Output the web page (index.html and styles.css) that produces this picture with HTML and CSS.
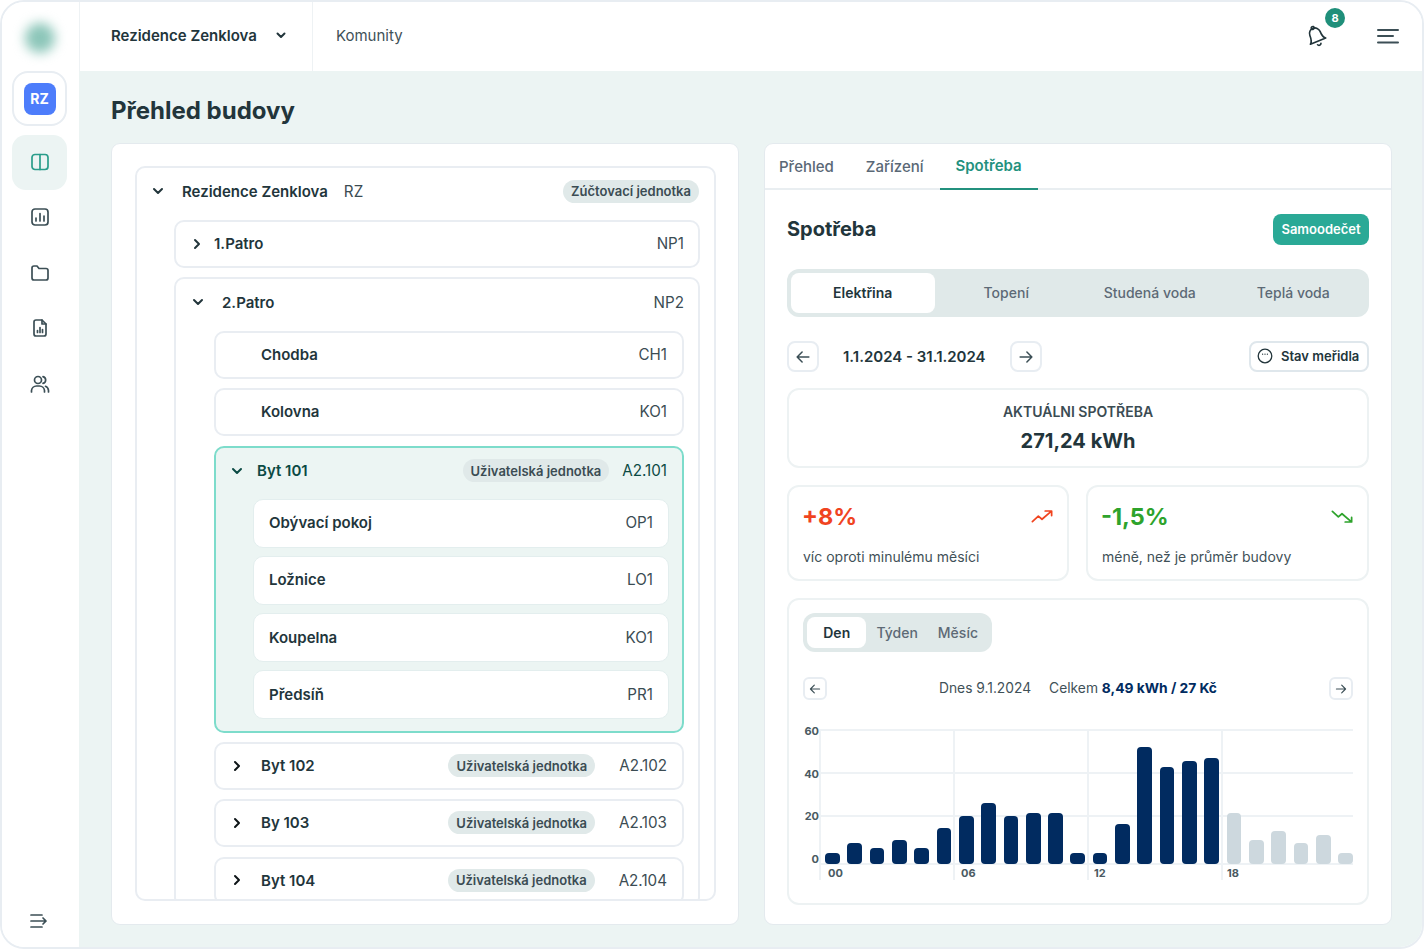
FILE: index.html
```html
<!DOCTYPE html>
<html lang="cs">
<head>
<meta charset="utf-8">
<title>Přehled budovy</title>
<link rel="stylesheet" href="styles.css">
</head>
<body>
<div class="frame">
  <aside class="sidebar">
    <div class="logo"></div>
    <div class="avatar-card"><div class="avatar">RZ</div></div>
    <nav class="nav">
      <a class="nav-item active"><svg class="ico" viewBox="0 0 20 20"><rect x="2" y="2.5" width="16" height="15" rx="3"/><path d="M10 2.500v15"/></svg></a>
      <a class="nav-item"><svg class="ico" viewBox="0 0 20 20"><rect x="2" y="2" width="16" height="16" rx="3"/><path d="M6 14v-3M10 14V6.500M14 14V9"/></svg></a>
      <a class="nav-item"><svg class="ico" viewBox="0 0 20 20"><path d="M2 5a2 2 0 0 1 2-2h3l2 2.500h7a2 2 0 0 1 2 2V15a2 2 0 0 1-2 2H4a2 2 0 0 1-2-2z"/></svg></a>
      <a class="nav-item"><svg class="ico" viewBox="0 0 20 20"><path d="M4 4a2 2 0 0 1 2-2h6l4 4v10a2 2 0 0 1-2 2H6a2 2 0 0 1-2-2z"/><path d="M12 2v4h4M7.500 14.500v-2M10 14.500V9.500M12.500 14.500v-3"/></svg></a>
      <a class="nav-item"><svg class="ico" viewBox="0 0 20 20"><circle cx="8" cy="6" r="3.500"/><path d="M1.500 18v-1.500a5 5 0 0 1 5-4.500h3a5 5 0 0 1 5 4.500V18M13 2.600a3.500 3.500 0 0 1 0 6.800M15.500 12.300a5 5 0 0 1 3 4.200V18"/></svg></a>
    </nav>
    <a class="collapse"><svg class="ico" viewBox="0 0 20 20"><path d="M2 4h11M2 10h15M2 16h11M14 7l3 3-3 3"/></svg></a>
  </aside>

  <div class="main">
    <header class="topbar">
      <div class="building">
        <span>Rezidence Zenklova</span>
        <svg class="chev" viewBox="0 0 16 16"><path d="M4.500 6.500 8 10l3.500-3.500"/></svg>
      </div>
      <div class="top-link">Komunity</div>
      <div class="top-actions">
        <div class="bell">
          <svg class="bell-ico" viewBox="0 0 24 24"><path d="M6 9a6 6 0 0 1 12 0c0 7 3 9 3 9H3s3-2 3-9"/><path d="M10 21.500a2.200 2.200 0 0 0 4 0"/><circle cx="12" cy="2.500" r="1.600"/></svg>
          <span class="badge-count">8</span>
        </div>
        <svg class="menu-ico" viewBox="0 0 22 16"><path d="M1 2h20M1 8h15M1 14.500h20"/></svg>
      </div>
    </header>

    <main class="content">
      <h1 class="title">Přehled budovy</h1>
      <div class="columns">
        <section class="panel panel-left">
          <div class="tree">
            <div class="root-head">
              <svg class="chev" viewBox="0 0 16 16"><path d="M4 6l4 4 4-4"/></svg>
              <span class="name">Rezidence Zenklova</span>
              <span class="root-code">RZ</span>
              <span class="pill pill-root">Zúčtovací jednotka</span>
            </div>
            <div class="root-children">
              <div class="node row">
                <svg class="chev" viewBox="0 0 16 16"><path d="M6 4l4 4-4 4"/></svg>
                <span class="name">1.Patro</span>
                <span class="code">NP1</span>
              </div>
              <div class="node">
                <div class="floor-head">
                  <svg class="chev" viewBox="0 0 16 16"><path d="M4 6l4 4 4-4"/></svg>
                  <span class="name">2.Patro</span>
                  <span class="code">NP2</span>
                </div>
                <div class="floor-children">
                  <div class="node row leaf"><span class="name">Chodba</span><span class="code">CH1</span></div>
                  <div class="node row leaf"><span class="name">Kolovna</span><span class="code">KO1</span></div>
                  <div class="node selected">
                    <div class="selected-head">
                      <svg class="chev" viewBox="0 0 16 16"><path d="M4 6l4 4 4-4"/></svg>
                      <span class="name">Byt 101</span>
                      <span class="pill">Uživatelská jednotka</span>
                      <span class="code">A2.101</span>
                    </div>
                    <div class="rooms">
                      <div class="node row room"><span class="name">Obývací pokoj</span><span class="code">OP1</span></div>
                      <div class="node row room"><span class="name">Ložnice</span><span class="code">LO1</span></div>
                      <div class="node row room"><span class="name">Koupelna</span><span class="code">KO1</span></div>
                      <div class="node row room"><span class="name">Předsíň</span><span class="code">PR1</span></div>
                    </div>
                  </div>
                  <div class="node row flat">
                    <svg class="chev dark" viewBox="0 0 16 16"><path d="M6 4l4 4-4 4"/></svg>
                    <span class="name">Byt 102</span>
                    <span class="pill">Uživatelská jednotka</span>
                    <span class="code">A2.102</span>
                  </div>
                  <div class="node row flat">
                    <svg class="chev dark" viewBox="0 0 16 16"><path d="M6 4l4 4-4 4"/></svg>
                    <span class="name">By 103</span>
                    <span class="pill">Uživatelská jednotka</span>
                    <span class="code">A2.103</span>
                  </div>
                  <div class="node row flat">
                    <svg class="chev dark" viewBox="0 0 16 16"><path d="M6 4l4 4-4 4"/></svg>
                    <span class="name">Byt 104</span>
                    <span class="pill">Uživatelská jednotka</span>
                    <span class="code">A2.104</span>
                  </div>
                </div>
              </div>
            </div>
          </div>
        </section>

        <section class="panel panel-right">
          <div class="tabs">
            <a class="tab">Přehled</a>
            <a class="tab">Zařízení</a>
            <a class="tab active">Spotřeba</a>
          </div>
          <div class="panel-body">
            <div class="head-row">
              <h2 class="h2">Spotřeba</h2>
              <button class="primary">Samoodečet</button>
            </div>
            <div class="segment">
              <span class="seg active">Elektřina</span>
              <span class="seg">Topení</span>
              <span class="seg">Studená voda</span>
              <span class="seg">Teplá voda</span>
            </div>
            <div class="date-row">
              <button class="icon-btn"><svg class="arrow" viewBox="0 0 20 20"><path d="M16.500 10h-13M9 4.500 3.500 10 9 15.500"/></svg></button>
              <span class="date">1.1.2024 - 31.1.2024</span>
              <button class="icon-btn"><svg class="arrow" viewBox="0 0 20 20"><path d="M3.500 10h13M11 4.500l5.500 5.500-5.500 5.500"/></svg></button>
              <button class="meter-btn">
                <svg class="meter" viewBox="0 0 16 16"><circle cx="8" cy="8" r="6.800"/><path d="M5.600 6.200h.01M8 6.200h.01M10.400 6.200h.01"/></svg>
                Stav meřidla
              </button>
            </div>
            <div class="card total">
              <div class="total-label">AKTUÁLNI SPOTŘEBA</div>
              <div class="total-value">271,24 kWh</div>
            </div>
            <div class="stats">
              <div class="card stat">
                <div class="stat-top">
                  <span class="stat-num up">+8%</span>
                  <svg class="trend up" viewBox="0 0 24 16"><path d="M1.500 13.500 8 7.500l4 3.500 10-8.500M15.500 2H22.500V7"/></svg>
                </div>
                <div class="stat-text">víc oproti minulému měsíci</div>
              </div>
              <div class="card stat">
                <div class="stat-top">
                  <span class="stat-num down">-1,5%</span>
                  <svg class="trend down" viewBox="0 0 24 16"><path d="M1.500 2.500 8 8.500l4-3.500 10 8.500M15.500 14H22.500V9"/></svg>
                </div>
                <div class="stat-text">méně, než je průměr budovy</div>
              </div>
            </div>
            <div class="card chart-card">
              <div class="mini-seg">
                <span class="mini active">Den</span>
                <span class="mini">Týden</span>
                <span class="mini">Měsíc</span>
              </div>
              <div class="chart-nav">
                <button class="icon-btn small"><svg class="arrow" viewBox="0 0 20 20"><path d="M16.500 10h-13M9 4.500 3.500 10 9 15.500"/></svg></button>
                <div class="chart-info"><span class="today">Dnes 9.1.2024</span><span>Celkem <b>8,49 kWh / 27 Kč</b></span></div>
                <button class="icon-btn small"><svg class="arrow" viewBox="0 0 20 20"><path d="M3.500 10h13M11 4.500l5.500 5.500-5.500 5.500"/></svg></button>
              </div>
              <div class="chart">
                <div class="y-axis"><span>60</span><span>40</span><span>20</span><span>0</span></div>
                <div class="plot">
                  <div class="hline l60"></div>
                  <div class="hline l40"></div>
                  <div class="hline l20"></div>
                  <div class="hline l0"></div>
                  <div class="cols"><span>00</span><span>06</span><span>12</span><span>18</span></div>
                  <div class="bars">
                    <i style="height:11px"></i><i style="height:21px"></i><i style="height:16px"></i><i style="height:24px"></i>
                    <i style="height:16px"></i><i style="height:36px"></i><i style="height:48px"></i><i style="height:61px"></i>
                    <i style="height:48px"></i><i style="height:51px"></i><i style="height:51px"></i><i style="height:11px"></i>
                    <i style="height:11px"></i><i style="height:40px"></i><i style="height:117px"></i><i style="height:97px"></i>
                    <i style="height:103px"></i><i style="height:106px"></i>
                    <i class="future" style="height:51px"></i><i class="future" style="height:24px"></i><i class="future" style="height:33px"></i>
                    <i class="future" style="height:21px"></i><i class="future" style="height:29px"></i><i class="future" style="height:11px"></i>
                  </div>
                </div>
              </div>
            </div>
          </div>
        </section>
      </div>
    </main>
  </div>
</div>
</body>
</html>
```
FILE: styles.css
```css
* { box-sizing: border-box; }
html, body { margin: 0; padding: 0; background: #fff; }
body { font-family: Inter, "Noto Sans", sans-serif; color: #22353b; font-size: 14px; }
h1, h2 { margin: 0; }
button { font-family: inherit; cursor: pointer; }

.frame { width: 1424px; height: 949px; border: 2px solid #e8edf2; border-radius: 24px; overflow: hidden; display: flex; background: #fff; }

.ico { width: 20px; height: 20px; fill: none; stroke: #3c4f56; stroke-width: 1.700; stroke-linecap: round; stroke-linejoin: round; }
.sidebar { width: 77px; flex: none; padding: 21px 12px 16px 10px; display: flex; flex-direction: column; background: #fff; }
.logo { width: 30px; height: 30px; margin: 0 auto; border-radius: 50%; background: #8cc6b9; filter: blur(6px); }
.avatar-card { width: 55px; height: 55px; margin-top: 18px; border: 2px solid #e8edf2; border-radius: 16px; display: flex; align-items: center; justify-content: center; }
.avatar { width: 32px; height: 32px; border-radius: 8px; background: #4d7dfb; color: #fff; font-weight: 700; font-size: 14px; display: flex; align-items: center; justify-content: center; }
.nav { margin-top: 9px; display: flex; flex-direction: column; gap: 0.5px; }
.nav-item { width: 55px; height: 55px; padding: 0 0 2px 0; display: flex; align-items: center; justify-content: center; border-radius: 14px; }
.nav-item.active { background: #ecf4f3; }
.nav-item.active .ico { stroke: #2a9d8a; }
.collapse { margin-top: auto; display: flex; justify-content: center; padding-right: 1px; }

.main { flex: 1; min-width: 0; display: flex; flex-direction: column; }
.topbar { height: 69px; flex: none; display: flex; align-items: stretch; background: #fff; border-left: 1px solid #eef2f4; }
.building { width: 233px; padding: 0 0 3px 31px; display: flex; align-items: center; gap: 16px; font-size: 15px; font-weight: 600; border-right: 1px solid #eef2f4; }
.building .chev { width: 16px; height: 16px; }
.top-link { padding: 0 0 3px 23px; display: flex; align-items: center; font-size: 15px; color: #3f5158; }
.top-actions { margin-left: auto; display: flex; align-items: center; padding: 0 23px 2px 0; gap: 50px; }
.bell { position: relative; width: 20px; height: 20px; }
.bell-ico { display: block; width: 22px; height: 22px; margin: -1px 0 0 -2px; fill: none; stroke: #22353b; stroke-width: 1.800; stroke-linejoin: round; stroke-linecap: round; transform: rotate(-22deg); }
.badge-count { position: absolute; left: 18px; top: -18px; width: 20px; height: 20px; border-radius: 50%; background: #1f8f7a; color: #fff; font-size: 11px; font-weight: 700; display: flex; align-items: center; justify-content: center; }
.menu-ico { width: 22px; height: 16px; fill: none; stroke: #3c4f56; stroke-width: 2; stroke-linecap: round; }

.chev { width: 16px; height: 16px; flex: none; fill: none; stroke: #22353b; stroke-width: 2; stroke-linecap: round; stroke-linejoin: round; }
.chev.dark { stroke: #0d1417; }

.content { flex: 1; min-height: 0; display: flex; flex-direction: column; padding: 26px 30px 22px 32px; background: #ecf4f3; }
.title { font-size: 24px; line-height: 28px; font-weight: 700; }
.columns { flex: 1; min-height: 0; margin-top: 18px; display: flex; gap: 25px; }
.panel { width: 628px; background: #fff; border: 1px solid #e4eaee; border-radius: 9px; display: flex; flex-direction: column; min-height: 0; }

.panel-left { padding: 22px 22px 23px 23px; }
.tree { flex: 1; min-height: 0; overflow: hidden; border: 2px solid #e9edf2; border-radius: 10px; }
.name { font-weight: 600; font-size: 15px; }
.code { margin-left: auto; font-size: 15.200px; color: #3b4c53; }
.pill { height: 23px; padding: 0 8px; border-radius: 12px; background: #e0e9e9; font-size: 13px; font-weight: 600; color: #3b4c53; display: flex; align-items: center; white-space: nowrap; }

.root-head { height: 46px; margin-bottom: 6px; padding: 0 15px 0 13px; display: flex; align-items: center; gap: 16px; }
.root-code { font-size: 15.200px; color: #3b4c53; }
.pill-root { margin-left: auto; }
.root-children { padding: 0 14px 0 37px; display: flex; flex-direction: column; gap: 9px; }

.node { background: #fff; border: 2px solid #e9edf2; border-radius: 10px; flex: none; }
.row { height: 48px; display: flex; align-items: center; padding: 0 14px 1px 13px; gap: 9px; }
.floor-head { height: 46px; display: flex; align-items: center; gap: 16px; padding: 0 14px; }
.floor-children { margin-top: 6px; padding: 0 14px 0 38px; display: flex; flex-direction: column; gap: 9.250px; }
.leaf { padding: 0 15px 1px 45px; }

.selected { background: #ecf5f3; border-color: #7ddccb; padding-bottom: 11.500px; }
.selected-head { height: 46px; display: flex; align-items: center; padding: 0 15px 0 13px; gap: 12px; color: #0b4a44; }
.selected-head .chev { stroke: #0b4a44; }
.selected-head .code { margin-left: 1px; color: #0b4a44; }
.selected-head .pill { margin-left: auto; }
.rooms { margin-top: 5px; padding: 0 13px 0 37px; display: flex; flex-direction: column; gap: 8.250px; }
.room { height: 49px; padding: 0 15px 1px 15px; border: 1px solid #e3eeee; }

.flat { padding: 0 15px 1px 13px; gap: 16px; }
.flat .pill { margin-left: auto; }
.flat .code { margin-left: 8px; }

.tabs { height: 46px; flex: none; display: flex; border-bottom: 2px solid #e9eef1; }
.tab { padding: 0 16px 2px; display: flex; align-items: center; font-size: 15px; font-weight: 500; color: #5a6876; margin-bottom: -2px; }
.tab:first-child { margin-left: -2px; }
.tab.active { color: #23917e; font-weight: 600; border-bottom: 2px solid #23917e; }

.panel-body { flex: 1; min-height: 0; padding: 24px 22px 18px; display: flex; flex-direction: column; }
.head-row { height: 31px; display: flex; align-items: center; justify-content: space-between; }
.h2 { font-size: 20px; font-weight: 700; padding-bottom: 1px; }
.primary { height: 31px; width: 96px; border: 0; padding: 0 0 1px; border-radius: 8px; background: #2aa996; color: #fff; font-size: 13px; font-weight: 600; }

.segment { height: 48px; margin-top: 24px; padding: 4px; border-radius: 12px; background: #e0e9e9; display: grid; grid-template-columns: repeat(4, 1fr); }
.seg { display: flex; align-items: center; justify-content: center; padding-bottom: 1px; font-size: 14px; font-weight: 500; color: #5d6a76; border-radius: 8px; }
.seg.active { background: #fff; color: #22353b; font-weight: 600; }

.date-row { height: 31px; margin-top: 24px; display: flex; align-items: center; }
.icon-btn { width: 32px; height: 31px; padding: 0; background: #fff; border: 2px solid #e8edf2; border-radius: 8px; display: flex; align-items: center; justify-content: center; flex: none; }
.arrow { width: 18px; height: 18px; fill: none; stroke: #3c4f56; stroke-width: 1.700; stroke-linecap: round; stroke-linejoin: round; }
.date { width: 191px; padding: 0 0 1px 24px; font-size: 15px; font-weight: 600; }
.meter-btn { margin-left: auto; width: 120px; height: 31px; padding: 0 0 1px 6px; background: #fff; border: 2px solid #dfe7ec; border-radius: 8px; display: flex; align-items: center; gap: 8px; color: #22353b; font-size: 13px; font-weight: 600; white-space: nowrap; }
.meter { width: 16px; height: 16px; flex: none; fill: none; stroke: #22353b; stroke-width: 1.300; stroke-linecap: round; }

.card { background: #fff; border: 2px solid #edf2f3; border-radius: 12px; }
.total { height: 80px; margin-top: 16px; display: flex; flex-direction: column; align-items: center; padding-top: 14px; }
.total-label { font-size: 14px; line-height: 16px; font-weight: 600; color: #3b4c53; }
.total-value { margin-top: 9px; font-size: 20px; line-height: 24px; font-weight: 700; }
.stats { margin-top: 17px; display: grid; grid-template-columns: 282px 1fr; gap: 17px; }
.stat { height: 96px; padding: 14px 14px 0; }
.stat-top { height: 30px; display: flex; align-items: center; justify-content: space-between; }
.stat-num { font-size: 23.500px; font-weight: 700; margin-left: -1px; }
.stat-num.up { color: #f0441f; }
.stat-num.down { color: #2ea32c; }
.trend { width: 22px; height: 15px; fill: none; stroke-width: 1.900; stroke-linecap: round; stroke-linejoin: round; }
.trend.up { stroke: #f0441f; }
.trend.down { stroke: #2ea32c; }
.stat-text { margin-top: 17px; font-size: 14px; line-height: 18px; color: #3f5158; }

.chart-card { height: 307px; margin-top: 17px; padding: 13px 14px 0; }
.mini-seg { width: 189px; height: 39px; padding: 4px; border-radius: 12px; background: #e0e9e9; display: flex; }
.mini { padding: 0 10px; display: flex; align-items: center; font-size: 14px; font-weight: 500; color: #5d6a76; }
.mini.active { width: 60px; padding: 0; justify-content: center; background: #fff; border-radius: 8px; font-weight: 600; color: #22353b; }
.chart-nav { height: 23px; margin-top: 25px; display: flex; align-items: center; }
.icon-btn.small { width: 24px; height: 23px; border-radius: 6px; }
.icon-btn.small .arrow { width: 14px; height: 14px; }
.chart-info { flex: 1; display: flex; justify-content: center; gap: 18px; padding-bottom: 1px; font-size: 13.800px; color: #3f5158; }
.chart-info b { color: #012b60; font-weight: 700; }
.chart { height: 155px; margin-top: 25px; display: flex; }
.y-axis { width: 16px; flex: none; display: flex; flex-direction: column; gap: 30.500px; font-size: 11px; line-height: 12px; font-weight: 700; color: #4a5a62; text-align: right; }
.plot { position: relative; flex: 1; height: 151px; margin-top: 4px; }
.hline { position: absolute; left: 0; right: 0; height: 2px; background: #eef2f5; }
.l60 { top: 0; }
.l40 { top: 43px; }
.l20 { top: 86px; }
.l0 { top: 134px; }
.cols { position: absolute; inset: 0; display: grid; grid-template-columns: repeat(4, 134px); }
.cols span { border-left: 2px solid #eef2f5; display: flex; align-items: flex-end; padding: 0 0 1px 6px; font-size: 11px; line-height: 12px; font-weight: 700; color: #4a5a62; }
.cols span:first-child { padding-left: 7px; }
.cols span:nth-child(3) { padding-left: 5px; }
.cols span:last-child { padding-left: 4px; }
.bars { position: relative; height: 135px; padding-left: 6px; display: flex; align-items: flex-end; justify-content: space-between; }
.bars i { width: 14.700px; background: #012b60; border-radius: 4px; display: block; }
.bars i.future { background: #cdd8de; }
```
